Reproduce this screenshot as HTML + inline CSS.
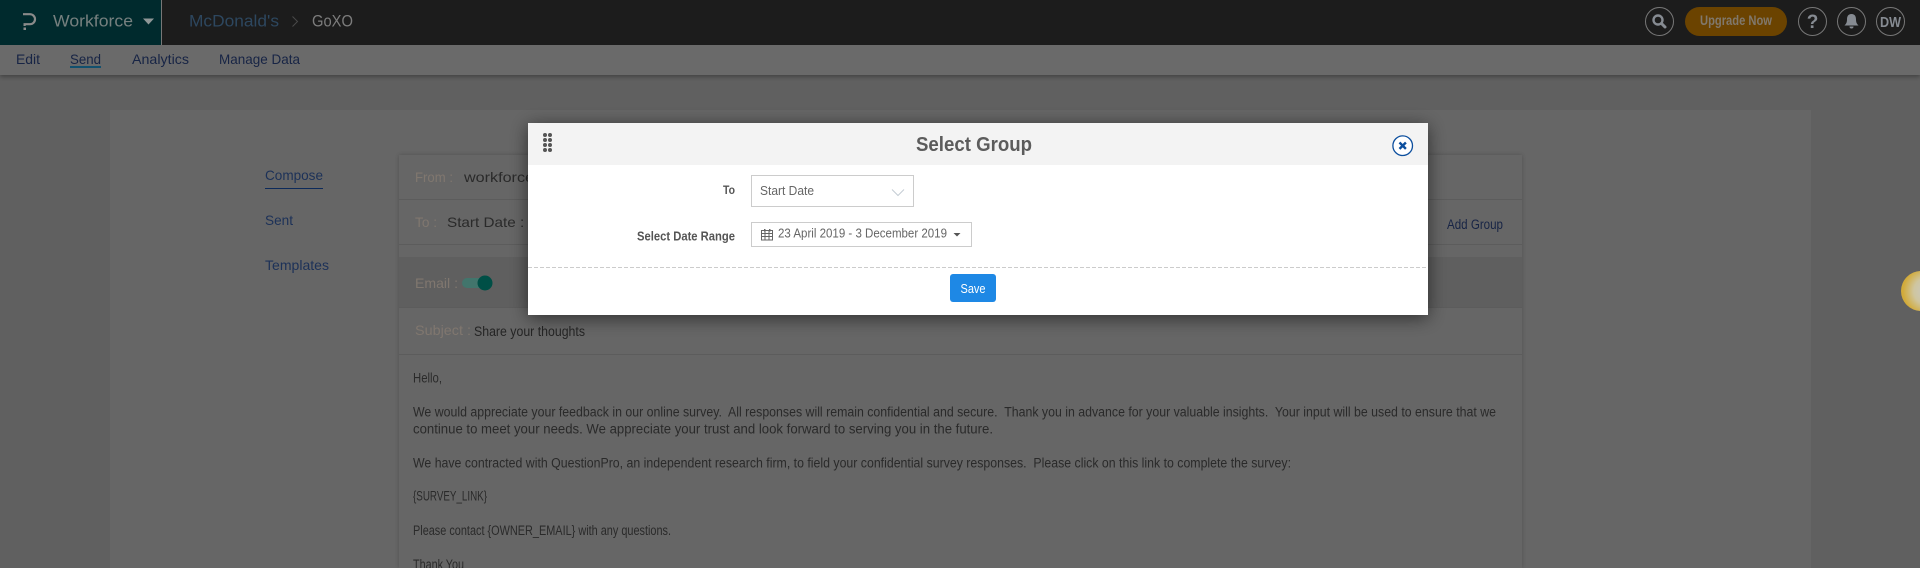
<!DOCTYPE html>
<html><head><meta charset="utf-8"><title>Select Group</title>
<style>
html,body{margin:0;padding:0;width:1920px;height:568px;overflow:hidden;background:#606060}
svg{display:block;position:absolute;left:0;top:0}
text{font-family:"Liberation Sans",sans-serif;white-space:pre;dominant-baseline:auto}
</style></head><body>
<svg width="1920" height="568" viewBox="0 0 1920 568" xmlns="http://www.w3.org/2000/svg">
<defs>
<filter id="ms" x="-10%" y="-30%" width="120%" height="160%"><feDropShadow dx="0" dy="3" stdDeviation="9" flood-color="#000" flood-opacity=".55"/></filter>
<filter id="cs" x="-2%" y="-2%" width="104%" height="104%"><feDropShadow dx="0" dy="0" stdDeviation="2.5" flood-color="#000" flood-opacity=".22"/></filter>
<filter id="ns" x="-1%" y="-20%" width="102%" height="160%"><feDropShadow dx="0" dy="2" stdDeviation="2" flood-color="#000" flood-opacity=".3"/></filter>
<radialGradient id="ball" cx="65%" cy="50%" r="60%"><stop offset="0" stop-color="#c9c9c4"/><stop offset=".55" stop-color="#cfc6a0"/><stop offset="1" stop-color="#d2ab3a"/></radialGradient>
</defs>
<rect width="1920" height="568" fill="#606060"/>
<rect x="110" y="110" width="1701" height="458" fill="#666"/>
<!-- nav -->
<rect y="45" width="1920" height="30" fill="#6b6b6b" filter="url(#ns)"/>
<rect width="1920" height="45" fill="#1c1c1c"/>
<rect width="161" height="45" fill="#002a2d"/>
<rect x="161" width="1" height="45" fill="#777"/>
<path d="M23 14.200h7a5 5 0 0 1 0 10H24.600V26" fill="none" stroke="#8a8a8a" stroke-width="2.200"/><rect x="23.500" y="27.500" width="2.500" height="2.500" fill="#8a8a8a"/>
<text x="53" y="26.500" font-size="17" fill="#76807f" textLength="80" lengthAdjust="spacingAndGlyphs">Workforce</text>
<path d="M143 18.500h11l-5.500 6z" fill="#8f9797"/>
<text x="189" y="26.500" font-size="17" fill="#2d475f" textLength="90" lengthAdjust="spacingAndGlyphs">McDonald's</text>
<path d="M292.500 16.500l5 5-5 5" fill="none" stroke="#4a4a4a" stroke-width="1"/>
<text x="312" y="26.500" font-size="17" fill="#7c7c7c" textLength="41" lengthAdjust="spacingAndGlyphs">GoXO</text>
<g font-size="14" fill="#172445">
<text x="16" y="64" textLength="24" lengthAdjust="spacingAndGlyphs">Edit</text>
<text x="70" y="64" textLength="31" lengthAdjust="spacingAndGlyphs">Send</text>
<text x="132" y="64" textLength="57" lengthAdjust="spacingAndGlyphs">Analytics</text>
<text x="219" y="64" textLength="81" lengthAdjust="spacingAndGlyphs">Manage Data</text>
</g>
<rect x="70" y="66" width="31" height="2" fill="#12506e"/>
<!-- top right -->
<g fill="none" stroke="#777" stroke-width="1">
<circle cx="1659.500" cy="21.500" r="14"/><circle cx="1812.500" cy="21.500" r="14"/><circle cx="1851.500" cy="21.500" r="14"/><circle cx="1890.500" cy="21.500" r="14"/>
</g>
<circle cx="1658" cy="20" r="4.500" fill="none" stroke="#868b92" stroke-width="2.400"/><path d="M1661.500 23.500l3.500 3.500" stroke="#868b92" stroke-width="3" stroke-linecap="round"/>
<rect x="1685" y="7" width="102" height="29" rx="14.500" fill="#6b4300"/>
<text x="1700" y="25" font-size="13.500" font-weight="bold" fill="#80786c" textLength="72" lengthAdjust="spacingAndGlyphs">Upgrade Now</text>
<text x="1812.500" y="28" font-size="19" font-weight="bold" fill="#868b92" text-anchor="middle">?</text>
<path d="M1851.500 14c-3.500 0-4.500 2.500-4.500 5.500 0 3-1 4.500-2.500 6h14c-1.500-1.500-2.500-3-2.500-6 0-3-1-5.500-4.500-5.500z" fill="#868b92"/><path d="M1849.500 26.500a2 2 0 0 0 4 0z" fill="#868b92"/>
<text x="1890.500" y="27" font-size="14.500" font-weight="bold" fill="#868b92" text-anchor="middle" textLength="21" lengthAdjust="spacingAndGlyphs">DW</text>
<!-- side -->
<g font-size="14" fill="#1c3158">
<text x="265" y="180" textLength="58" lengthAdjust="spacingAndGlyphs">Compose</text>
<text x="265" y="225" textLength="28" lengthAdjust="spacingAndGlyphs">Sent</text>
<text x="265" y="270" textLength="64" lengthAdjust="spacingAndGlyphs">Templates</text>
</g>
<rect x="265" y="188" width="58" height="1" fill="#0d2a5a"/>
<!-- card -->
<rect x="399" y="155" width="1123" height="413" fill="#666" filter="url(#cs)"/>
<rect x="399" y="257" width="1123" height="50" fill="#5f5f5f"/>
<g fill="#5c5c5c">
<rect x="399" y="199" width="1123" height="1"/><rect x="399" y="244" width="1123" height="1"/><rect x="399" y="307" width="1123" height="1"/><rect x="399" y="354" width="1123" height="1"/>
</g>
<g font-size="14" fill="#80776f">
<text x="415" y="182" textLength="38" lengthAdjust="spacingAndGlyphs">From :</text>
<text x="415" y="227" textLength="22" lengthAdjust="spacingAndGlyphs">To :</text>
<text x="415" y="288" textLength="43" lengthAdjust="spacingAndGlyphs">Email :</text>
<text x="415" y="335" textLength="56" lengthAdjust="spacingAndGlyphs">Subject :</text>
</g>
<g font-size="14" fill="#2a2a2a">
<text x="464" y="182" textLength="70" lengthAdjust="spacingAndGlyphs">workforce</text>
<text x="447" y="227" textLength="90" lengthAdjust="spacingAndGlyphs">Start Date : 3</text>
</g>
<text x="474" y="336" font-size="13.500" fill="#242424" textLength="111" lengthAdjust="spacingAndGlyphs">Share your thoughts</text>
<text x="1447" y="229" font-size="13.500" fill="#172445" textLength="56" lengthAdjust="spacingAndGlyphs">Add Group</text>
<rect x="462" y="278" width="27" height="10" rx="5" fill="#42756c"/>
<circle cx="485" cy="283" r="7.500" fill="#004f46"/>
<g font-size="13.500" fill="#2a2a2a">
<text x="413" y="382.500" textLength="29" lengthAdjust="spacingAndGlyphs">Hello,</text>
<text x="413" y="416.500" textLength="1083" lengthAdjust="spacingAndGlyphs">We would appreciate your feedback in our online survey.  All responses will remain confidential and secure.  Thank you in advance for your valuable insights.  Your input will be used to ensure that we</text>
<text x="413" y="433.500" textLength="580" lengthAdjust="spacingAndGlyphs">continue to meet your needs. We appreciate your trust and look forward to serving you in the future.</text>
<text x="413" y="467.500" textLength="878" lengthAdjust="spacingAndGlyphs">We have contracted with QuestionPro, an independent research firm, to field your confidential survey responses.  Please click on this link to complete the survey:</text>
<text x="413" y="500.500" textLength="74" lengthAdjust="spacingAndGlyphs">{SURVEY_LINK}</text>
<text x="413" y="535" textLength="258" lengthAdjust="spacingAndGlyphs">Please contact {OWNER_EMAIL} with any questions.</text>
<text x="413" y="569" textLength="51" lengthAdjust="spacingAndGlyphs">Thank You</text>
</g>
<circle cx="1921" cy="291" r="20" fill="url(#ball)"/>
<!-- modal -->
<rect x="528" y="123" width="900" height="192" fill="#fff" filter="url(#ms)"/>
<rect x="528" y="123" width="900" height="42" fill="#f3f3f3"/>
<g fill="#555">
<circle cx="545" cy="135" r="2"/><circle cx="550" cy="135" r="2"/><circle cx="545" cy="140" r="2"/><circle cx="550" cy="140" r="2"/><circle cx="545" cy="145" r="2"/><circle cx="550" cy="145" r="2"/><circle cx="545" cy="150" r="2"/><circle cx="550" cy="150" r="2"/>
</g>
<text x="916" y="151" font-size="20" font-weight="bold" fill="#5c5c5c" textLength="116" lengthAdjust="spacingAndGlyphs">Select Group</text>
<circle cx="1402.700" cy="145.700" r="9.800" fill="#fff" stroke="#0d4f9e" stroke-width="1.300"/>
<path d="M1399.500 142.500l6.400 6.400M1405.900 142.500l-6.400 6.400" stroke="#0d4f9e" stroke-width="2.400"/>
<text x="723" y="194" font-size="12" font-weight="bold" fill="#555" textLength="12" lengthAdjust="spacingAndGlyphs">To</text>
<rect x="751.500" y="175.500" width="162" height="31" fill="#fff" stroke="#ccc"/>
<text x="760" y="195" font-size="13" fill="#666" textLength="54" lengthAdjust="spacingAndGlyphs">Start Date</text>
<path d="M892 189.500l6 6 6-6" fill="none" stroke="#c4ccd4" stroke-width="1"/>
<text x="637" y="240.500" font-size="12.500" font-weight="bold" fill="#555" textLength="98" lengthAdjust="spacingAndGlyphs">Select Date Range</text>
<rect x="751.500" y="222.500" width="220" height="24" fill="#fff" stroke="#ccc"/>
<g fill="none" stroke="#666" stroke-width="1">
<rect x="761.500" y="230.500" width="11" height="9.500"/><path d="M761.500 233.500h11M761.500 236.500h11M765 230.500v9.500M769 230.500v9.500"/>
</g>
<rect x="764" y="229" width="1.500" height="2.500" fill="#666"/><rect x="769" y="229" width="1.500" height="2.500" fill="#666"/>
<text x="778" y="237.500" font-size="13" fill="#666" textLength="169" lengthAdjust="spacingAndGlyphs">23 April 2019 - 3 December 2019</text>
<path d="M953.500 233h7l-3.500 3.500z" fill="#555"/>
<line x1="528" y1="267.500" x2="1428" y2="267.500" stroke="#ccc" stroke-width="1" stroke-dasharray="4 2"/>
<rect x="950" y="274" width="46" height="28" rx="3" fill="#1e88e5"/>
<text x="973" y="293" font-size="13" font-weight="normal" fill="#fff" text-anchor="middle" textLength="25" lengthAdjust="spacingAndGlyphs">Save</text>
</svg>
</body></html>
